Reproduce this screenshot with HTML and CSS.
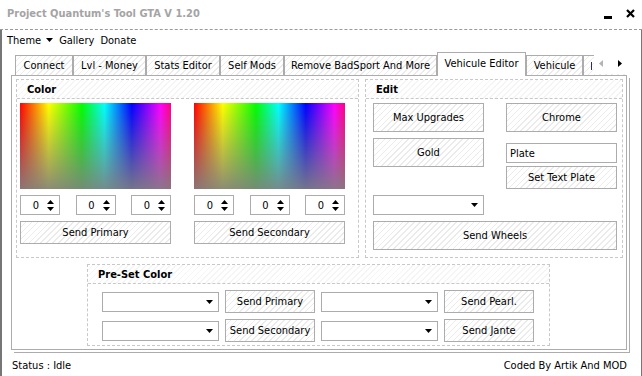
FILE: index.html
```html
<!DOCTYPE html>
<html>
<head>
<meta charset="utf-8">
<title>Project Quantum's Tool GTA V 1.20</title>
<link rel="stylesheet" href="styles.css">
</head>
<body>
<div class="window">
  <header class="titlebar">
    <span class="title">Project Quantum's Tool GTA V 1.20</span>
    <div class="wincontrols">
      <svg class="wc-min" width="8" height="10" viewBox="0 0 8 10"><rect x="0" y="7" width="8" height="3" fill="#000"/></svg>
      <svg class="wc-close" width="9" height="9" viewBox="0 0 9 9"><path d="M1 1L8 8M8 1L1 8" stroke="#000" stroke-width="2.2"/></svg>
    </div>
  </header>
  <div class="frame">
    <nav class="menubar">
      <span class="menu-item">Theme <svg width="7" height="4" viewBox="0 0 7 4"><path d="M0 0H7L3.5 4Z" fill="#000"/></svg></span>
      <span class="menu-item">Gallery</span>
      <span class="menu-item">Donate</span>
    </nav>
    <div class="tabctl">
      <div class="tabstrip">
        <div class="tab w-connect">Connect</div>
        <div class="tab w-lvl">Lvl - Money</div>
        <div class="tab w-stats">Stats Editor</div>
        <div class="tab w-self">Self Mods</div>
        <div class="tab w-remove">Remove BadSport And More</div>
        <div class="tab active w-vedit">Vehicule Editor</div>
        <div class="tab w-veh">Vehicule</div>
        <div class="tab w-more"><span class="glyph-edge"></span></div>
        <div class="tab-scroll">
          <svg width="4" height="7" viewBox="0 0 4 7"><path d="M4 0V7L0 3.5Z" fill="#b4b4b4"/></svg>
          <svg width="4" height="7" viewBox="0 0 4 7"><path d="M0 0V7L4 3.5Z" fill="#000"/></svg>
        </div>
      </div>
      <div class="tabpage">
        <div class="top-row">
          <section class="group g-color">
            <div class="group-head">Color</div>
            <div class="color-body">
              <div class="color-col">
                <div class="picker"></div>
                <div class="spin-row">
                  <div class="spin"><span>0</span><span class="spin-arrows"><svg width="7" height="4" viewBox="0 0 7 4"><path d="M0 4H7L3.5 0Z" fill="#000"/></svg><svg width="7" height="4" viewBox="0 0 7 4"><path d="M0 0H7L3.5 4Z" fill="#000"/></svg></span></div>
                  <div class="spin"><span>0</span><span class="spin-arrows"><svg width="7" height="4" viewBox="0 0 7 4"><path d="M0 4H7L3.5 0Z" fill="#000"/></svg><svg width="7" height="4" viewBox="0 0 7 4"><path d="M0 0H7L3.5 4Z" fill="#000"/></svg></span></div>
                  <div class="spin"><span>0</span><span class="spin-arrows"><svg width="7" height="4" viewBox="0 0 7 4"><path d="M0 4H7L3.5 0Z" fill="#000"/></svg><svg width="7" height="4" viewBox="0 0 7 4"><path d="M0 0H7L3.5 4Z" fill="#000"/></svg></span></div>
                </div>
                <div class="btn btn-send">Send Primary</div>
              </div>
              <div class="color-col">
                <div class="picker"></div>
                <div class="spin-row">
                  <div class="spin"><span>0</span><span class="spin-arrows"><svg width="7" height="4" viewBox="0 0 7 4"><path d="M0 4H7L3.5 0Z" fill="#000"/></svg><svg width="7" height="4" viewBox="0 0 7 4"><path d="M0 0H7L3.5 4Z" fill="#000"/></svg></span></div>
                  <div class="spin"><span>0</span><span class="spin-arrows"><svg width="7" height="4" viewBox="0 0 7 4"><path d="M0 4H7L3.5 0Z" fill="#000"/></svg><svg width="7" height="4" viewBox="0 0 7 4"><path d="M0 0H7L3.5 4Z" fill="#000"/></svg></span></div>
                  <div class="spin"><span>0</span><span class="spin-arrows"><svg width="7" height="4" viewBox="0 0 7 4"><path d="M0 4H7L3.5 0Z" fill="#000"/></svg><svg width="7" height="4" viewBox="0 0 7 4"><path d="M0 0H7L3.5 4Z" fill="#000"/></svg></span></div>
                </div>
                <div class="btn btn-send">Send Secondary</div>
              </div>
            </div>
          </section>
          <section class="group g-edit">
            <div class="group-head">Edit</div>
            <div class="edit-body">
              <div class="edit-row">
                <div class="btn btn-edit">Max Upgrades</div>
                <div class="btn btn-edit">Chrome</div>
              </div>
              <div class="edit-row">
                <div class="btn btn-edit">Gold</div>
                <div class="plate-stack">
                  <div class="textbox">Plate</div>
                  <div class="btn btn-plate">Set Text Plate</div>
                </div>
              </div>
              <div class="combo combo-wheels"><svg width="7" height="4" viewBox="0 0 7 4"><path d="M0 0H7L3.5 4Z" fill="#000"/></svg></div>
              <div class="btn btn-wheels">Send Wheels</div>
            </div>
          </section>
        </div>
        <section class="group g-preset">
          <div class="group-head">Pre-Set Color</div>
          <div class="preset-body">
            <div class="preset-row">
              <div class="combo combo-preset"><svg width="7" height="4" viewBox="0 0 7 4"><path d="M0 0H7L3.5 4Z" fill="#000"/></svg></div>
              <div class="btn btn-preset">Send Primary</div>
              <div class="combo combo-preset"><svg width="7" height="4" viewBox="0 0 7 4"><path d="M0 0H7L3.5 4Z" fill="#000"/></svg></div>
              <div class="btn btn-preset">Send Pearl.</div>
            </div>
            <div class="preset-row">
              <div class="combo combo-preset"><svg width="7" height="4" viewBox="0 0 7 4"><path d="M0 0H7L3.5 4Z" fill="#000"/></svg></div>
              <div class="btn btn-preset">Send Secondary</div>
              <div class="combo combo-preset"><svg width="7" height="4" viewBox="0 0 7 4"><path d="M0 0H7L3.5 4Z" fill="#000"/></svg></div>
              <div class="btn btn-preset">Send Jante</div>
            </div>
          </div>
        </section>
      </div>
    </div>
    <footer class="statusbar">
      <span>Status : Idle</span>
      <span>Coded By Artik And MOD</span>
    </footer>
  </div>
</div>
</body>
</html>
```

FILE: styles.css
```css
* { box-sizing: border-box; }
html, body { margin: 0; padding: 0; background: #fff; }
body {
  width: 642px;
  height: 376px;
  overflow: hidden;
  font-family: "DejaVu Sans Condensed", "DejaVu Sans", sans-serif;
  font-stretch: condensed;
  font-size: 11px;
  color: #000;
}
.window { width: 642px; height: 376px; display: flex; flex-direction: column; }

.titlebar {
  height: 30px;
  flex: none;
  display: flex;
  align-items: center;
  justify-content: space-between;
  padding: 0 7px 2px 7px;
  border-bottom: 1px dashed #9a9a9a;
}
.title { font-weight: bold; color: #a4a4a4; }
.wincontrols { display: flex; align-items: center; gap: 14px; }

.frame {
  flex: 1;
  display: flex;
  flex-direction: column;
  border-left: 2px solid #767676;
  border-right: 1px solid #767676;
}
.menubar { height: 20px; flex: none; display: flex; align-items: center; padding-left: 5px; gap: 6px; }
.menu-item { display: flex; align-items: center; gap: 5px; }

.tabctl { margin-left: 9px; width: 616px; flex: none; }
.tabstrip {
  position: relative;
  z-index: 2;
  height: 26px;
  margin-bottom: -1px;
  display: flex;
  align-items: flex-end;
  padding-left: 4px;
  overflow: hidden;
}
.tab {
  flex: none;
  height: 20px;
  margin-bottom: 1px;
  display: flex;
  align-items: center;
  justify-content: center;
  border: 1px solid #acacac;
  border-bottom: none;
  white-space: nowrap;
  background: repeating-linear-gradient(135deg, #fff 0 3px, #ebebeb 3px 4.2px);
}
.tab.active { height: 24px; margin-bottom: 0; padding-bottom: 3px; background: #fff; }
.w-connect { width: 58px; }
.w-lvl { width: 73px; }
.w-stats { width: 74px; }
.w-self { width: 64px; }
.w-remove { width: 153px; }
.w-vedit { width: 89px; }
.w-veh { width: 57px; }
.w-more { width: 70px; justify-content: flex-start; padding-left: 7px; }
.glyph-edge { display: block; width: 1px; height: 8px; background: #2c2c6e; }
.tab-scroll {
  position: absolute;
  right: 0;
  top: 3px;
  width: 33px;
  height: 21px;
  background: #fff;
  display: flex;
  align-items: center;
  padding-left: 5px;
  gap: 15px;
}

.tabpage {
  height: 275px;
  border: 1px solid #acacac;
  padding: 3px 3px 3px 4px;
  box-shadow: 2px 2px 0 #fff, 3px 3px 0 #acacac;
  display: flex;
  flex-direction: column;
  gap: 6px;
}
.top-row { display: flex; gap: 6px; height: 179px; }

.group { border: 1px dashed #c8c8c8; display: flex; flex-direction: column; }
.group-head {
  height: 19px;
  flex: none;
  border-bottom: 1px dashed #c8c8c8;
  padding: 1px 0 0 10px;
  font-weight: bold;
  display: flex;
  align-items: center;
  background: repeating-linear-gradient(135deg, #fff 0 3px, #f5f5f5 3px 4.2px);
}

.btn {
  display: flex;
  align-items: center;
  justify-content: center;
  border: 1px solid #acacac;
  white-space: nowrap;
  background: repeating-linear-gradient(135deg, #fff 0 3px, #ebebeb 3px 4.2px);
}

.g-color { width: 343px; }
.color-body { display: flex; gap: 23px; padding: 4px 13px 13px 3px; }
.color-col { width: 151px; display: flex; flex-direction: column; gap: 6px; }
.picker {
  height: 86px;
  background:
    linear-gradient(to bottom, rgba(128,128,128,0) 0%, rgba(128,128,128,0.9) 100%),
    linear-gradient(to right, #f00 0%, #ff0 19%, #0f0 41%, #0ff 56%, #00f 74%, #f0f 93%, #ff0080 100%);
}
.spin-row { display: flex; justify-content: space-between; height: 20px; }
.spin {
  width: 40px;
  height: 20px;
  border: 1px solid #acacac;
  display: flex;
  align-items: center;
  justify-content: flex-end;
  padding-right: 5px;
}
.spin-arrows { display: flex; flex-direction: column; gap: 3px; margin-left: 8px; }
.spin-arrows svg { display: block; }
.btn-send { height: 23px; }

.g-edit { width: 258px; }
.edit-body { padding: 4px 5px 7px 7px; display: flex; flex-direction: column; gap: 6px; }
.edit-row { display: flex; justify-content: space-between; align-items: flex-start; }
.btn-edit { width: 111px; height: 29px; }
.plate-stack { width: 111px; margin-top: 5px; display: flex; flex-direction: column; gap: 3px; }
.textbox { height: 20px; border: 1px solid #acacac; padding-left: 3px; display: flex; align-items: center; }
.btn-plate { height: 23px; }
.combo {
  height: 20px;
  border: 1px solid #acacac;
  display: flex;
  align-items: center;
  justify-content: flex-end;
  padding-right: 5px;
  background: #fff;
}
.combo-wheels { width: 111px; }
.btn-wheels { height: 29px; }

.g-preset { width: 463px; height: 82px; margin-left: 71px; flex: none; }
.preset-body { padding: 6px 15px 3px 14px; display: flex; flex-direction: column; gap: 6px; }
.preset-row { display: flex; align-items: center; gap: 6px; height: 23px; }
.combo-preset { width: 117px; }
.btn-preset { width: 90px; height: 23px; }

.statusbar {
  flex: 1;
  display: flex;
  justify-content: space-between;
  align-items: center;
  padding: 4px 14px 0 10px;
}
```
